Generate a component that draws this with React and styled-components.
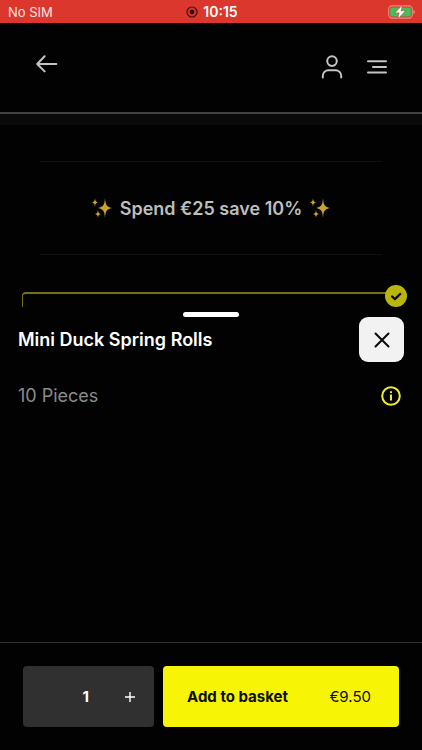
import React from "react"
import styled, { createGlobalStyle } from "styled-components"

const GlobalStyle = createGlobalStyle`
  *{
    box-sizing:border-box;
  }
  body{
    margin:0;
    background:#020202;
    color:white;
    font-family:Inter, "Liberation Sans", sans-serif;
  }
  button{
    font-family:inherit;
    cursor:pointer;
  }
`

const Sparkles = () => (
  <svg width="20" height="20" viewBox="0 0 20 20" fill="#c9a22f" aria-hidden="true">
    <path d="M13 0C13.6 6.6 14.2 8.8 20 10C14.2 11.2 13.6 13.4 13 20C12.4 13.4 11.8 11.2 6 10C11.8 8.8 12.4 6.6 13 0Z" />
    <path d="M3 0C3.3 3 3.7 3.7 6 4.4C3.7 5 3.3 5.8 3 9C2.7 5.8 2.3 5 0 4.4C2.3 3.7 2.7 3 3 0Z" />
    <path d="M6 12C6.3 14.6 6.8 15.4 9 16C6.8 16.6 6.3 17.4 6 20C5.7 17.4 5.2 16.6 3 16C5.2 15.4 5.7 14.6 6 12Z" />
  </svg>
)

const StatusBar = () => (
  <StatusRow>
    <span>No SIM</span>
    <Clock>
      <svg width="12" height="12" viewBox="0 0 12 12" aria-hidden="true">
        <circle cx="6" cy="6" r="5" fill="none" stroke="#4a0c0a" strokeWidth="1.2" />
        <circle cx="6" cy="6" r="2.4" fill="#2c0504" />
      </svg>
      10:15
    </Clock>
    <Battery width="28" height="14" viewBox="0 0 28 14" aria-hidden="true">
      <rect x="0.7" y="0.9" width="23.6" height="12.2" rx="3.6" fill="none" stroke="#ee8b84" strokeWidth="1.1" />
      <rect x="2.2" y="2.4" width="20.6" height="9.2" rx="2.2" fill="#43bf5b" />
      <path d="M25.4 5v4c1-.4 1.5-1.1 1.5-2s-.5-1.6-1.5-2z" fill="#ee8b84" />
      <path d="M14.4 0L6.8 7.9h4.3L9.7 14l7.9-8.2h-4.5z" fill="white" stroke="#d9372c" strokeWidth="0.6" />
    </Battery>
  </StatusRow>
)

const App = () => {
  return (
    <Page>
      <GlobalStyle />
      <StatusBar />
      <Header>
        <IconButton $raised aria-label="Back">
          <svg width="22" height="18" viewBox="0 0 22 18">
            <path d="M20.3 9H1.4M8.6 1.3L1.2 9l7.4 7.4" />
          </svg>
        </IconButton>
        <HeaderActions>
          <IconButton aria-label="Account">
            <svg width="22" height="24" viewBox="0 0 22 24">
              <circle cx="11" cy="6.1" r="4.8" />
              <path d="M1.8 22.6v-1.8a5.6 5.6 0 0 1 5.6-5.6h7.2a5.6 5.6 0 0 1 5.6 5.6v1.8" />
            </svg>
          </IconButton>
          <IconButton aria-label="Menu">
            <svg width="22" height="16" viewBox="0 0 22 16">
              <path d="M2 2.3h18M7 8h13M2 13.6h18" />
            </svg>
          </IconButton>
        </HeaderActions>
      </Header>
      <Banner />
      <Promo>
        <Sparkles />
        Spend €25 save 10%
        <Sparkles />
      </Promo>
      <SelectedCard>
        <CheckBadge width="22" height="22" viewBox="0 0 22 22" aria-hidden="true">
          <circle cx="11" cy="11" r="11" fill="#b9b50a" />
          <path d="M7 11.4l2.9 2.7 5.4-5.2" fill="none" stroke="#0c0c02" strokeWidth="2.2" strokeLinecap="round" strokeLinejoin="round" />
        </CheckBadge>
      </SelectedCard>
      <Sheet>
        <Handle />
        <SheetRow>
          <h1>Mini Duck Spring Rolls</h1>
          <CloseButton aria-label="Close">
            <svg width="16" height="16" viewBox="0 0 16 16">
              <path d="M1.5 1.5l13 13M14.5 1.5l-13 13" />
            </svg>
          </CloseButton>
        </SheetRow>
        <SheetRow $spaced>
          <p>10 Pieces</p>
          <InfoButton aria-label="Product information">
            <svg width="20" height="20" viewBox="0 0 20 20">
              <circle cx="10" cy="10" r="8.8" />
              <path d="M10 8.6v5.8M10 5.2v1.8" />
            </svg>
          </InfoButton>
        </SheetRow>
      </Sheet>
      <Footer>
        <Quantity>
          <output aria-label="Quantity">1</output>
          <PlusButton aria-label="Increase quantity">
            <svg width="12" height="12" viewBox="0 0 12 12">
              <path d="M6 1v10M1 6h10" />
            </svg>
          </PlusButton>
        </Quantity>
        <AddButton>
          <strong>Add to basket</strong>
          <span>€9.50</span>
        </AddButton>
      </Footer>
    </Page>
  )
}
export default App

const Page = styled.div`
  display:flex;
  flex-flow:column;
  min-height:100vh;
`
const StatusRow = styled.div`
  display:grid;
  grid-template-columns:1fr auto 1fr;
  align-items:center;
  height:23px;
  padding:0 6px 0 8px;
  background:#db372d;
  color:#ffe4e1;
  font-size:13px;
`
const Clock = styled.span`
  display:flex;
  align-items:center;
  gap:5px;
  color:white;
  font-size:14px;
  font-weight:600;
`
const Battery = styled.svg`
  justify-self:end;
`
const Header = styled.header`
  display:flex;
  justify-content:space-between;
  align-items:center;
  height:91px;
  padding:0 34px 0 36px;
  border-bottom:2px solid #424242;
`
const HeaderActions = styled.div`
  display:flex;
  align-items:center;
  gap:23px;
`
const IconButton = styled.button`
  display:flex;
  padding:0;
  padding-bottom:${({ $raised }) => ($raised ? "8px" : "2px")};
  border:0;
  background:none;

  svg{
    fill:none;
    stroke:#c4c4c4;
    stroke-width:2;
    stroke-linecap:round;
    stroke-linejoin:round;
  }
`
const Banner = styled.div`
  height:11px;
  background:#0b0a0a;
`
const Promo = styled.section`
  display:flex;
  justify-content:center;
  align-items:center;
  gap:8px;
  height:94px;
  margin:36px 40px 0;
  border-top:1px solid #121212;
  border-bottom:1px solid #121212;
  color:#bdbdbd;
  font-size:18px;
  font-weight:600;
`
const SelectedCard = styled.div`
  position:relative;
  height:15px;
  margin:37px 22px 0;
  border:solid #76730f;
  border-width:2px 0 0 1px;
  border-radius:4px 0 0 0;
`
const CheckBadge = styled.svg`
  position:absolute;
  top:-9px;
  right:-7px;
`
const Sheet = styled.main`
  display:flex;
  flex-flow:column;
  flex:1;
  padding:5px 18px 24px;
`
const Handle = styled.div`
  align-self:center;
  width:56px;
  height:5px;
  border-radius:3px;
  background:white;
`
const SheetRow = styled.div`
  display:flex;
  justify-content:space-between;
  align-items:center;
  margin-top:${({ $spaced }) => ($spaced ? "23px" : "0")};

  h1,p{
    margin:0;
    font-size:18px;
    line-height:22px;
  }
  h1{
    font-weight:600;
  }
  p{
    color:#8a8a8a;
  }
`
const CloseButton = styled.button`
  display:flex;
  justify-content:center;
  align-items:center;
  width:45px;
  height:45px;
  padding:0;
  border:0;
  border-radius:9px;
  background:#f2f2f2;

  svg{
    fill:none;
    stroke:#0a0a0a;
    stroke-width:2;
    stroke-linecap:round;
  }
`
const InfoButton = styled.button`
  display:flex;
  padding:0;
  margin-right:3px;
  border:0;
  background:none;

  svg{
    fill:none;
    stroke:#f0ee2a;
    stroke-width:2;
  }
`
const Footer = styled.footer`
  display:grid;
  grid-template-columns:5fr 9fr;
  gap:9px;
  padding:23px;
  border-top:1px solid #303030;
`
const Quantity = styled.div`
  display:flex;
  justify-content:flex-end;
  align-items:center;
  gap:35px;
  height:61px;
  padding-right:18px;
  border-radius:4px;
  background:#303030;
  font-size:15px;
  font-weight:700;
`
const PlusButton = styled.button`
  display:flex;
  padding:0;
  border:0;
  background:none;

  svg{
    fill:none;
    stroke:white;
    stroke-width:1.4;
  }
`
const AddButton = styled.button`
  display:flex;
  justify-content:space-between;
  align-items:center;
  height:61px;
  padding:0 28px 0 24px;
  border:0;
  border-radius:4px;
  background:#f7f505;
  color:#0d0d02;
  font-size:15px;
`
